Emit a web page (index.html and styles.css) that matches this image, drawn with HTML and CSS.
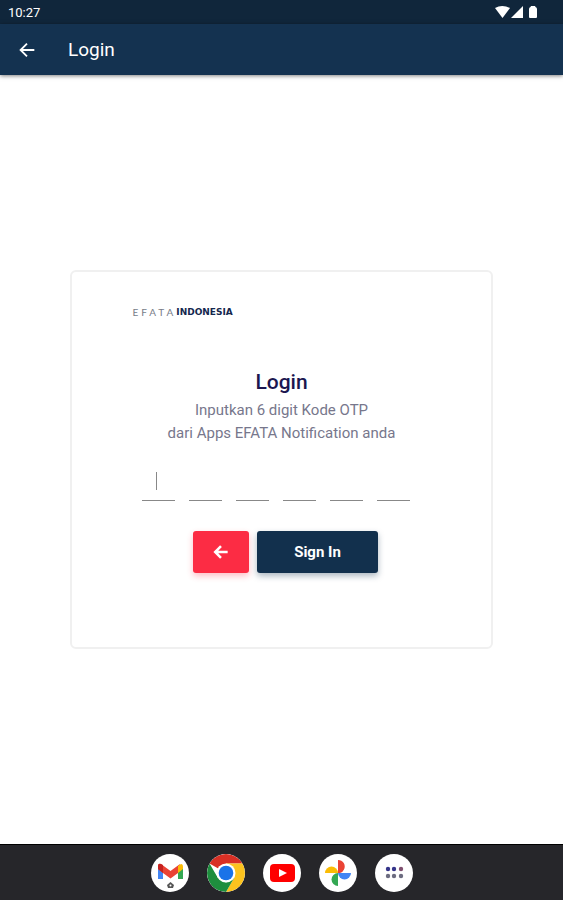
FILE: index.html
```html
<!DOCTYPE html>
<html lang="id">
<head>
  <meta charset="UTF-8" />
  <meta name="viewport" content="width=device-width, initial-scale=1.0" />
  <title>Login</title>
  <link rel="stylesheet" href="styles.css">
</head>
<body>
  <div class="status-bar">
    <span>10:27</span>
    <svg width="44" height="14" viewBox="0 0 44 14" fill="#fff">
      <path d="M0 3Q7-1 15 3L7.500 13Z" />
      <path d="M16 13H28V1Z" />
      <path d="M34 4q0-1.500 1.500-2L36 1h4l.500 1q1.500.500 1.500 2v8q0 1-1 1h-6q-1 0-1-1Z" />
    </svg>
  </div>

  <header class="app-bar">
    <a href="#" class="back" aria-label="Kembali">
      <svg width="22" height="22" viewBox="0 0 24 24"><path d="M20 12H5M12 5l-7 7 7 7" /></svg>
    </a>
    <span class="app-title">Login</span>
  </header>

  <main>
    <form class="card">
      <div class="logo"><span class="logo-light">EFATA</span><b>INDONESIA</b></div>
      <h1>Login</h1>
      <p>Inputkan 6 digit Kode OTP<br>dari Apps EFATA Notification anda</p>

      <div class="otp">
        <input type="text" maxlength="1" inputmode="numeric" aria-label="Digit 1">
        <input type="text" maxlength="1" inputmode="numeric" aria-label="Digit 2">
        <input type="text" maxlength="1" inputmode="numeric" aria-label="Digit 3">
        <input type="text" maxlength="1" inputmode="numeric" aria-label="Digit 4">
        <input type="text" maxlength="1" inputmode="numeric" aria-label="Digit 5">
        <input type="text" maxlength="1" inputmode="numeric" aria-label="Digit 6">
        <span class="caret"></span>
      </div>

      <div class="actions">
        <button type="button" class="btn btn-back" aria-label="Kembali">
          <svg width="20" height="20" viewBox="0 0 24 24"><path d="M20 12H5M12 5l-7 7 7 7" /></svg>
        </button>
        <button type="submit" class="btn btn-signin">Sign In</button>
      </div>
    </form>
  </main>

  <nav class="dock">
    <a href="#" class="app" aria-label="Gmail">
      <svg width="38" height="38" viewBox="0 0 38 38">
        <path d="M7 13v12h5V15Z" fill="#4285f4" />
        <path d="M27 15v10h5V13Z" fill="#34a853" />
        <path d="M7 15v-3q0-3 3-2l9.500 7 9.500-7-2 9-7.500 5.500L12 19Z" fill="#ea4335" />
        <path d="M27 12l3-2q2 0 2 3v2l-5 4Z" fill="#fbbc04" />
        <path d="M7 15v-3q0-3 3-2l2 1v8Z" fill="#c5221f" />
        <path d="M16 31l3.500-3 3.500 3-1 3h-5Z" fill="#555" />
        <circle cx="19.500" cy="31.500" r="1" fill="#fff" />
      </svg>
    </a>
    <a href="#" class="app" aria-label="Chrome">
      <svg width="38" height="38" viewBox="0 0 38 38">
        <path d="M19 19L2.550 9.500A19 19 0 0 1 35.450 9.500H19Z" fill="#d93025" />
        <path d="M19 9.500H35.450A19 19 0 0 1 19 38L27.200 23.750Z" fill="#fcc31e" />
        <path d="M2.550 9.500L10.800 23.750 19 28.500 27.200 23.750 19 38A19 19 0 0 1 2.550 9.500Z" fill="#1e8e3e" />
        <circle cx="19" cy="19" r="9.500" fill="#fff" />
        <circle cx="19" cy="19" r="7.300" fill="#1a73e8" />
      </svg>
    </a>
    <a href="#" class="app" aria-label="YouTube">
      <svg width="38" height="38" viewBox="0 0 38 38">
        <rect x="7" y="10" width="25" height="18" rx="4" fill="#f00" />
        <path d="M16 15v8l8-4Z" fill="#fff" />
      </svg>
    </a>
    <a href="#" class="app" aria-label="Photos">
      <svg width="38" height="38" viewBox="0 0 38 38">
        <path d="M19 19V6a6.500 6.500 0 0 1 6 9.500q-1 2.500-4 3.500Z" fill="#ea4335" />
        <path d="M19 19h13a6.500 6.500 0 0 1-13 0Z" fill="#4285f4" />
        <path d="M19 19v13a6.500 6.500 0 0 1 0-13Z" fill="#34a853" />
        <path d="M19 19H6a6.500 6.500 0 0 1 13 0Z" fill="#fbbc04" />
      </svg>
    </a>
    <a href="#" class="app" aria-label="Semua aplikasi">
      <svg width="38" height="38" viewBox="0 0 38 38">
        <g fill="#35358a">
          <circle cx="13" cy="15" r="2.200" /><circle cx="19" cy="15" r="2.200" />
        </g>
        <circle cx="26" cy="15" r="2.200" fill="#805070" />
        <g fill="#6c6c80">
          <circle cx="13" cy="22" r="2.200" /><circle cx="19" cy="22" r="2.200" /><circle cx="26" cy="22" r="2.200" />
        </g>
      </svg>
    </a>
  </nav>
</body>
</html>
```
FILE: styles.css
```css
* {
  box-sizing: border-box;
}

body {
  display: flex;
  flex-direction: column;
  min-height: 100vh;
  margin: 0;
  background-color: #fff;
  font-family: Roboto, "Liberation Sans", sans-serif;
}

svg {
  display: block;
}

.status-bar {
  display: flex;
  justify-content: space-between;
  align-items: center;
  height: 24px;
  padding: 0 24px 0 8px;
  background-color: #10263b;
  color: #fff;
  font-size: 13px;
}

.app-bar {
  display: flex;
  align-items: center;
  gap: 30px;
  height: 51px;
  padding: 0 16px;
  background-color: #143250;
  color: #fff;
  box-shadow: 0 1px 4px rgba(0, 0, 0, 0.5);
}

.back svg,
.btn svg {
  fill: none;
  stroke: #fff;
  stroke-width: 2;
}

.app-title {
  font-size: 19px;
}

main {
  flex: 1;
  display: flex;
  justify-content: center;
  align-items: center;
}

.card {
  width: 75%;
  padding: 32px 60px 74px;
  border: 2px solid #f0f0f0;
  border-radius: 6px;
  text-align: center;
}

.logo {
  display: flex;
  align-items: center;
  height: 16px;
  margin-bottom: 50px;
  color: #14274e;
  font-family: "DejaVu Sans", sans-serif;
  font-size: 9px;
}

.logo-light {
  color: #777c88;
  font-family: Lato, sans-serif;
  font-size: 10px;
  letter-spacing: 3px;
}

h1 {
  margin: 0 0 5px;
  color: #1b1650;
  font-size: 21px;
  font-weight: 500;
  line-height: 24px;
}

p {
  margin: 0;
  color: #77778c;
  font-size: 15px;
  line-height: 23px;
}

.otp {
  position: relative;
  display: flex;
  justify-content: center;
  gap: 14px;
  padding-right: 12px;
  margin-top: 19px;
}

.otp input {
  width: 33px;
  height: 37px;
  padding: 0;
  border: none;
  border-bottom: 1px solid #888;
  background: none;
  font-size: 18px;
  text-align: center;
  outline: none;
}

/* text cursor in the first digit */
.caret {
  position: absolute;
  top: 8px;
  left: 24px;
  width: 1px;
  height: 18px;
  background-color: #888;
}

.actions {
  display: flex;
  justify-content: center;
  gap: 8px;
  padding-left: 8px;
  margin-top: 30px;
}

.btn {
  display: flex;
  justify-content: center;
  align-items: center;
  height: 42px;
  border: none;
  border-radius: 3px;
  color: #fff;
  font-family: inherit;
  font-size: 15px;
  font-weight: 700;
  cursor: pointer;
}

.btn svg {
  stroke-width: 3;
}

.btn-back {
  width: 56px;
  background-color: #fc2c44;
  box-shadow: 0 3px 6px rgba(252, 44, 68, 0.3);
}

.btn-signin {
  width: 121px;
  background-color: #12304d;
  box-shadow: 0 3px 6px rgba(18, 48, 77, 0.35);
}

.dock {
  display: flex;
  justify-content: center;
  align-items: center;
  gap: 18px;
  height: 56px;
  background-color: #26262a;
  border-top: 1px solid #000;
}

.app {
  border-radius: 50%;
  background-color: #fff;
  overflow: hidden;
}
```
